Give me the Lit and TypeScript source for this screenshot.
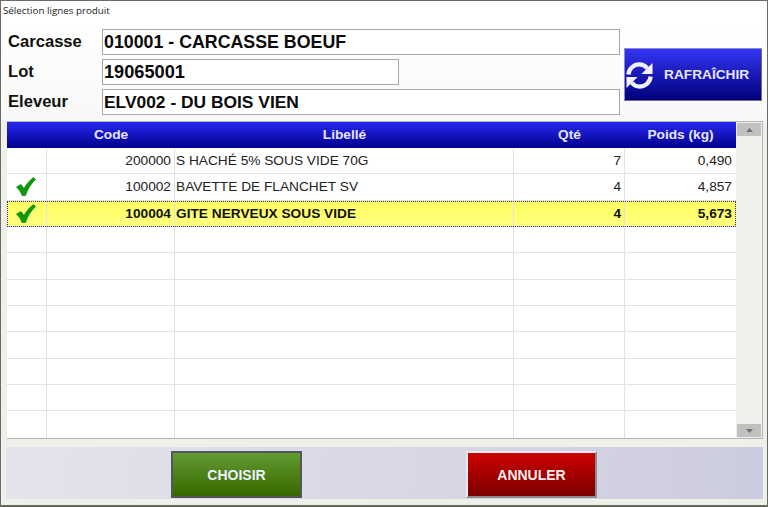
import { LitElement, html, css, svg } from "lit";
import { customElement } from "lit/decorators.js";

const rows: [boolean, string, string, string, string, boolean][] = [
  [false, "200000", "S HACHÉ 5% SOUS VIDE 70G", "7", "0,490", false],
  [true, "100002", "BAVETTE DE FLANCHET SV", "4", "4,857", false],
  [true, "100004", "GITE NERVEUX SOUS VIDE", "4", "5,673", true],
  [false, "", "", "", "", false],
  [false, "", "", "", "", false],
  [false, "", "", "", "", false],
  [false, "", "", "", "", false],
  [false, "", "", "", "", false],
  [false, "", "", "", "", false],
  [false, "", "", "", "", false],
  [false, "", "", "", "", false],
];

const check = svg`<svg class="chk" width="20" height="19" viewBox="0 0 20 19"><path d="M0.500 10 L5 7.500 L8 11.500 C10.500 7 13.500 3.500 17.500 0.500 L19.500 2.500 C15 7 11.500 12 9.500 18.500 L6 18.500 C5 15 3 12.500 0.500 10 Z" fill="#0a9a0a" stroke="#067006" stroke-width=".6"/></svg>`;

@customElement("app-root")
export class AppRoot extends LitElement {
  static styles = css`
    :host { display: block; width: 768px; height: 507px; background: #5a6a4a; font-family: "Liberation Sans", Arial, sans-serif; overflow: hidden; }
    .win { box-sizing: border-box; width: 768px; height: 506px; background: #f0f0eb; border: 1px solid #6a6a6a; display: flex; flex-direction: column; }
    .title { height: 21px; background: #fff; font: 9.8px "Open Sans", "Liberation Sans", sans-serif; color: #222; padding: 3px 0 0 2px; box-sizing: border-box; line-height: 14px; }
    .top { height: 99px; background: linear-gradient(#fff, #f8f8f6); display: flex; padding: 7px 0 0 6px; box-sizing: border-box; }
    .fields { width: 613px; display: flex; flex-direction: column; gap: 4px; }
    .field { display: flex; align-items: stretch; height: 26px; }
    .field label { width: 95px; flex: none; font-weight: 700; font-size: 16.6px; line-height: 26px; color: #111; padding-left: 1px; box-sizing: border-box; }
    .field .v { width: 518px; box-sizing: border-box; border: 1px solid #a8a8a8; background: #fff; font-weight: 700; font-size: 17.8px; line-height: 24px; padding-left: 1px; color: #0a0a0a; white-space: nowrap; }
    .field .v.short { width: 297px; font-size: 18.2px; }
    .field .v.tight { font-size: 17.4px; }
    .refresh { margin: 19px 0 0 4px; width: 138px; height: 53px; box-sizing: border-box; border: 1px solid; border-color: #8a8ad8 #6f6f80 #6f6f80 #8a8ad8; background: linear-gradient(#3434f4, #00007a); color: #e8e8ff; font-weight: 700; font-size: 13.7px; font-family: inherit; display: flex; align-items: center; padding: 0; gap: 10px; }
    .refresh svg { margin-top: 1px; }
    .table { margin: 0 0 0 6px; width: 756px; height: 318px; box-sizing: border-box; border: 1px solid #b4b4b4; border-width: 1px 1px 1px 0; display: flex; background: #fff; flex: none; }
    .grid { width: 729px; flex: none; display: flex; flex-direction: column; }
    .row { display: grid; grid-template-columns: 40px 128px 339px 111px 111px; height: 26.35px; box-sizing: border-box; border-bottom: 1px solid #e2e2e2; font-size: 13.7px; color: #222; line-height: 26px; }
    .row:last-child { border-bottom: none; }
    .row > div { border-right: 1px solid #e2e2e2; padding: 0 3px 0 1px; box-sizing: border-box; white-space: nowrap; overflow: hidden; }
    .row > div:last-child { border-right: none; }
    .row .r { text-align: right; }
    .row .r4 { padding-right: 4px; }
    .row .ic { padding: 3px 0 0 9px; }
    .chk { display: block; }
    .row.sel { background: linear-gradient(#ffff60, #ffff80); font-weight: 700; font-size: 13.7px; color: #111; outline: 1px dotted #2a2a90; outline-offset: -1px; }
    .head { display: grid; grid-template-columns: 40px 128px 339px 111px 111px; height: 26px; background: linear-gradient(#2828f0, #00008c); color: #e6e6ff; font-weight: 700; font-size: 13.7px; line-height: 25px; text-align: center; flex: none; }
    .sb { flex: 1; background: #f0f0eb; display: flex; flex-direction: column; justify-content: space-between; padding: 1px; box-sizing: border-box; }
    .sb div { height: 13px; background: #c0c0c0; display: flex; align-items: center; justify-content: center; }
    .bar { margin: 8px 0 0 5px; width: 757px; height: 52px; background: linear-gradient(100deg, #e4e4ec, #ccccdf); display: flex; flex: none; }
    button { cursor: pointer; font-family: inherit; font-weight: 700; font-size: 14px; padding: 0; }
    .ok { margin: 4px 0 0 165px; width: 131px; height: 47px; border: 2px solid #55555a; background: linear-gradient(#649a32, #356900); color: #eef; }
    .no { margin: 4px 0 0 164px; width: 131px; height: 47px; border: 2px solid; border-color: #ececf0 #8a8a90 #8a8a90 #ececf0; background: linear-gradient(#cc0000, #7c0000); color: #fdeeee; }
  `;

  render() {
    return html`<div class="win">
      <div class="title">Sélection lignes produit</div>
      <div class="top">
        <div class="fields">
          <div class="field"><label>Carcasse</label><div class="v">010001 - CARCASSE BOEUF</div></div>
          <div class="field"><label>Lot</label><div class="v short">19065001</div></div>
          <div class="field"><label>Eleveur</label><div class="v tight">ELV002 - DU BOIS VIEN</div></div>
        </div>
        <button class="refresh">
          <svg width="29" height="29" viewBox="0 0 30 30"><g fill="none" stroke="#f2f2ff" stroke-width="4.400"><path d="M3.500 14 C4 8 9 3.500 15 3.500 C18.500 3.500 21 5 23 7.500"/><path d="M26.500 16 C26 22 21 26.500 15 26.500 C11.500 26.500 9 25 7 22.500"/></g><path fill="#f2f2ff" d="M28.500 2 V13.500 H17 Z M1.500 28 V16.500 H13 Z"/></svg>
          <span>RAFRAÎCHIR</span>
        </button>
      </div>
      <div class="table">
        <div class="grid">
          <div class="head"><div></div><div>Code</div><div>Libellé</div><div>Qté</div><div>Poids (kg)</div></div>
          ${rows.map(([c, code, lib, q, p, sel]) => html`<div class="row ${sel ? "sel" : ""}">
            <div class="ic">${c ? check : ""}</div>
            <div class="r">${code}</div>
            <div>${lib}</div>
            <div class="r">${q}</div>
            <div class="r r4">${p}</div>
          </div>`)}
        </div>
        <div class="sb">
          <div><svg width="7" height="4" viewBox="0 0 7 4"><path d="M3.500 0 L7 4 H0 Z" fill="#707070"/></svg></div>
          <div><svg width="7" height="4" viewBox="0 0 7 4"><path d="M3.500 4 L7 0 H0 Z" fill="#707070"/></svg></div>
        </div>
      </div>
      <div class="bar">
        <button class="ok">CHOISIR</button>
        <button class="no">ANNULER</button>
      </div>
    </div>`;
  }
}
